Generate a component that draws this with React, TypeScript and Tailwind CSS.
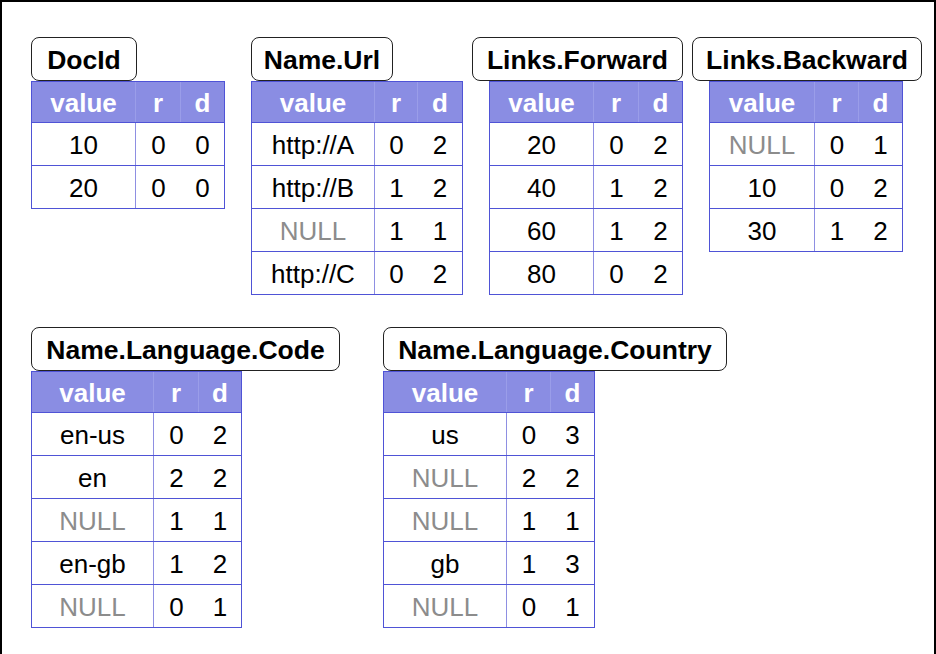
import React from "react";

type Row = [string, number, number];

type Column = {
  name: string;
  labelW: string;
  tableMl: string;
  cols: [string, string, string];
  rows: Row[];
};

// widths of the value / r / d columns (outer table border comes on top)
const TOP: Column[] = [
  {
    name: "DocId",
    labelW: "w-[106px]",
    tableMl: "ml-0",
    cols: ["w-[104px]", "w-[45px]", "w-[43px]"],
    rows: [
      ["10", 0, 0],
      ["20", 0, 0],
    ],
  },
  {
    name: "Name.Url",
    labelW: "w-[142px]",
    tableMl: "ml-0",
    cols: ["w-[123px]", "w-[43px]", "w-[44px]"],
    rows: [
      ["http://A", 0, 2],
      ["http://B", 1, 2],
      ["NULL", 1, 1],
      ["http://C", 0, 2],
    ],
  },
  {
    name: "Links.Forward",
    labelW: "w-[211px]",
    tableMl: "ml-[17px]",
    cols: ["w-[104px]", "w-[45px]", "w-[43px]"],
    rows: [
      ["20", 0, 2],
      ["40", 1, 2],
      ["60", 1, 2],
      ["80", 0, 2],
    ],
  },
  {
    name: "Links.Backward",
    labelW: "w-[230px]",
    tableMl: "ml-[17px]",
    cols: ["w-[105px]", "w-[44px]", "w-[43px]"],
    rows: [
      ["NULL", 0, 1],
      ["10", 0, 2],
      ["30", 1, 2],
    ],
  },
];

const BOTTOM: Column[] = [
  {
    name: "Name.Language.Code",
    labelW: "w-[309px]",
    tableMl: "ml-0",
    cols: ["w-[122px]", "w-[45px]", "w-[42px]"],
    rows: [
      ["en-us", 0, 2],
      ["en", 2, 2],
      ["NULL", 1, 1],
      ["en-gb", 1, 2],
      ["NULL", 0, 1],
    ],
  },
  {
    name: "Name.Language.Country",
    labelW: "w-[344px]",
    tableMl: "ml-0",
    cols: ["w-[123px]", "w-[44px]", "w-[43px]"],
    rows: [
      ["us", 0, 3],
      ["NULL", 2, 2],
      ["NULL", 1, 1],
      ["gb", 1, 3],
      ["NULL", 0, 1],
    ],
  },
];

const cell = "flex items-center justify-center pt-[3px]";

const ColumnBlock: React.FC<{ c: Column }> = ({ c }) => (
  <div className="flex flex-col items-start">
    <div
      className={`${c.labelW} h-[44px] flex items-center justify-center pt-[3px] rounded-lg border border-[#222] bg-white text-[26.5px] font-bold text-black`}
    >
      {c.name}
    </div>
    <div className={`${c.tableMl} border border-[#4f53d6] bg-white`}>
      {/* header */}
      <div className="flex h-[41px] bg-[#8a8de3] text-[26px] font-bold text-white border-b border-[#4f53d6]">
        <div className={`${c.cols[0]} ${cell} border-r border-[#9a9de9]`}>value</div>
        <div className={`${c.cols[1]} ${cell} border-r border-[#9a9de9]`}>r</div>
        <div className={`${c.cols[2]} ${cell}`}>d</div>
      </div>
      <div className="flex flex-col divide-y divide-[#4f53d6]">
        {c.rows.map(([v, r, d], i) => (
          <div key={i} className="flex h-[43px] last:h-[42px] text-[26px] text-black">
            <div
              className={`${c.cols[0]} ${cell} border-r border-[#8e8fe2] ${
                v === "NULL" ? "text-[#8c8c8c]" : ""
              }`}
            >
              {v}
            </div>
            <div className={`${c.cols[1]} ${cell}`}>{r}</div>
            <div className={`${c.cols[2]} ${cell}`}>{d}</div>
          </div>
        ))}
      </div>
    </div>
  </div>
);

const App: React.FC = () => {
  return (
    <div
      className="w-[936px] h-[654px] bg-white border-l-2 border-t-2 border-r-2 border-black overflow-hidden"
      style={{ fontFamily: '"Liberation Sans", Arial, sans-serif' }}
    >
      <div className="flex items-start pt-[35px] pl-[29px]">
        <ColumnBlock c={TOP[0]} />
        <div className="ml-[26px]">
          <ColumnBlock c={TOP[1]} />
        </div>
        <div className="ml-[9px]">
          <ColumnBlock c={TOP[2]} />
        </div>
        <div className="ml-[9px]">
          <ColumnBlock c={TOP[3]} />
        </div>
      </div>
      <div className="flex items-start pt-[32px] pl-[29px]">
        <ColumnBlock c={BOTTOM[0]} />
        <div className="ml-[43px]">
          <ColumnBlock c={BOTTOM[1]} />
        </div>
      </div>
    </div>
  );
};

export default App;
